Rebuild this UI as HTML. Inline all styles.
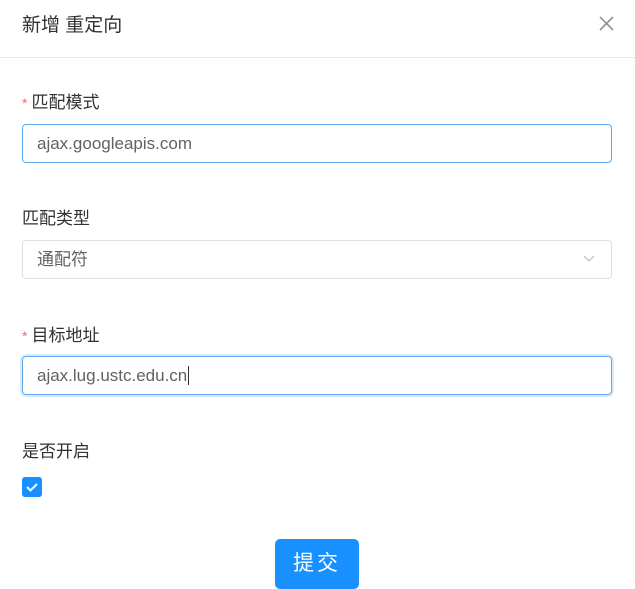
<!DOCTYPE html>
<html><head><meta charset="utf-8"><style>
body{margin:0;width:635px;height:579px;overflow:hidden;background:#fff;font-family:"Liberation Sans","Noto Sans CJK SC",sans-serif;color:#303133;position:relative}
.a{position:absolute}
.hdr{left:0;top:0;width:635px;height:57px;border-bottom:1px solid #e8e8e8}
.title{left:22px;top:10px;font-size:19px;color:#303133}
.lbl{font-size:17px;left:22px}
.star{color:#f56c6c;font-size:14px;margin-right:4px}
.inp{left:22px;width:590px;height:39px;border:1px solid #dcdfe6;border-radius:4px;box-sizing:border-box;font-size:17px;color:#606266;padding-left:14px;line-height:37px}
</style></head><body>
<div class="a hdr"></div>
<div class="a title">新增 重定向</div>
<svg class="a" style="left:599px;top:16px" width="15" height="15" viewBox="0 0 15 15"><path d="M1 1L14 14M14 1L1 14" stroke="#909399" stroke-width="1.6"/></svg>
<div class="a lbl" style="top:88px"><span class="star">*</span>匹配模式</div>
<div class="a inp" style="top:124px;border-color:#5fa9e8">ajax.googleapis.com</div>
<div class="a lbl" style="top:204px">匹配类型</div>
<div class="a inp" style="top:240px">通配符</div>
<svg class="a" style="left:583px;top:255px" width="12" height="8" viewBox="0 0 12 8"><path d="M1 1L6 6L11 1" stroke="#c0c4cc" stroke-width="1.3" fill="none"/></svg>
<div class="a lbl" style="top:321px"><span class="star">*</span>目标地址</div>
<div class="a inp" style="top:356px;border-color:#5fa9e8;box-shadow:0 0 0 2px #dcebfa">ajax.lug.ustc.edu.cn<span style="border-left:1px solid #303133;margin-left:1px"></span></div>
<div class="a lbl" style="top:437px">是否开启</div>
<div class="a" style="left:22px;top:477px;width:20px;height:20px;background:#1890ff;border-radius:3px"></div>
<svg class="a" style="left:22px;top:477px" width="20" height="20" viewBox="0 0 20 20"><path d="M5 10L8.5 13.5L15 7" stroke="#fff" stroke-width="2" fill="none"/></svg>
<div class="a" style="left:275px;top:539px;width:84px;height:50px;background:#1890ff;border-radius:5px;color:#fff;font-size:21px;text-align:center;line-height:50px;letter-spacing:3px">提交</div>
</body></html>
